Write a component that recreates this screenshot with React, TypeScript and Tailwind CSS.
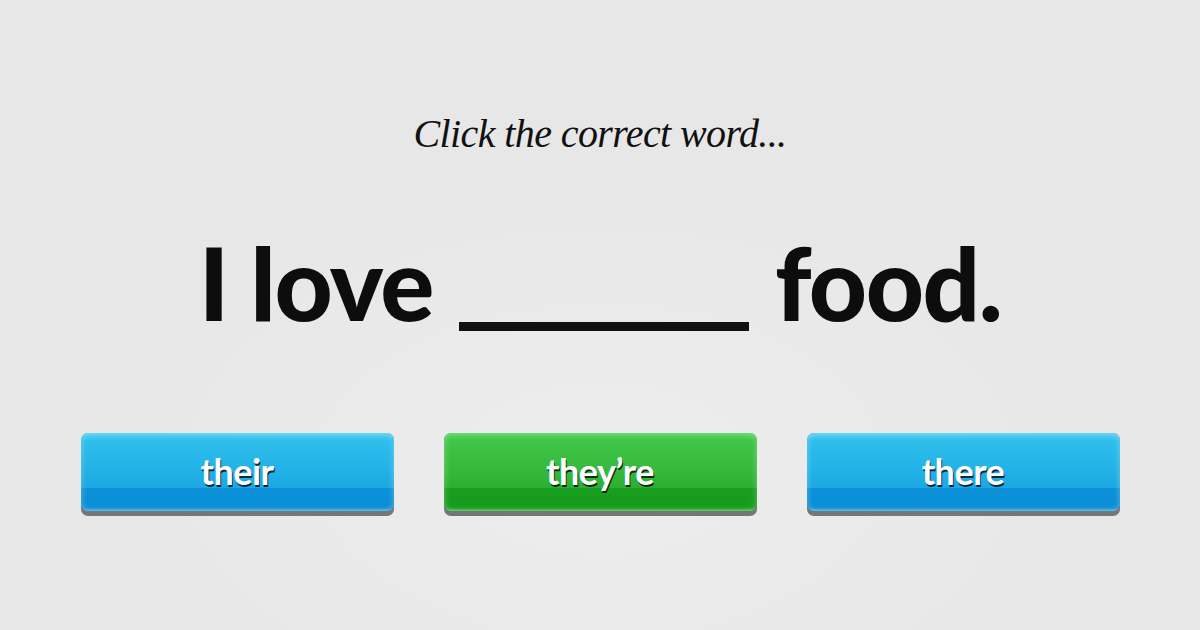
import React from "react";

function WordButton({ label, green }: { label: string; green?: boolean }) {
  const face = green
    ? "bg-[linear-gradient(to_bottom,#55d25b_0%,#41c548_10%,#35b93c_50%,#2bae32_70%,#1a9e20_71%,#169a1c_96%,#4cbf50_100%)]"
    : "bg-[linear-gradient(to_bottom,#52cff2_0%,#2ebeeb_10%,#22b1e6_50%,#1ca7e2_70%,#0c91d8_71%,#0a8dd6_96%,#40b0e6_100%)]";
  return (
    <div className="w-[313px] h-[83px] rounded-[7px] bg-[#767676] flex flex-col">
      <div
        className={`h-[78px] rounded-[7px] ${face} flex items-center justify-center shadow-[inset_0_0_6px_rgba(255,255,255,0.35)]`}
      >
        <span
          className="text-white text-[36px] font-bold tracking-[-0.5px] [text-shadow:1px_2px_0_rgba(0,0,0,0.75)] mt-[-3px]"
          style={{ fontFamily: "Lato, 'Noto Sans', sans-serif" }}
        >
          {label}
        </span>
      </div>
    </div>
  );
}

export default function App() {
  return (
    <div className="w-[1200px] h-[630px] overflow-hidden bg-[radial-gradient(ellipse_520px_300px_at_600px_470px,#ededed_0%,#e9e9e9_70%,#e7e7e7_100%)] flex flex-col items-center">
      <div
        className="mt-[109px] text-[40px] leading-[50px] italic text-[#111] tracking-[-0.6px]"
        style={{ fontFamily: "'Liberation Serif', serif" }}
      >
        Click the correct word...
      </div>
      <div
        className="mt-[68px] flex items-baseline text-[101px] leading-[110px] font-black text-[#0d0d0d] tracking-[-1.5px]"
        style={{ fontFamily: "Lato, 'Noto Sans', sans-serif" }}
      >
        <span>I love</span>
        <span className="inline-block w-[290px] h-[9px] bg-[#111] mx-[26px] translate-y-[10px]"></span>
        <span>food.</span>
      </div>
      <div className="mt-[96px] flex gap-[50px]">
        <WordButton label="their" />
        <WordButton label="they’re" green />
        <WordButton label="there" />
      </div>
    </div>
  );
}
